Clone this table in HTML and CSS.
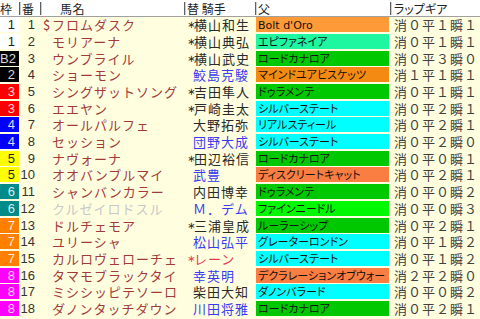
FILE: index.html
```html
<!DOCTYPE html>
<html lang="ja">
<head>
<meta charset="utf-8">
<title>出馬表</title>
<link rel="stylesheet" href="styles.css">
</head>
<body>
<div class="table">
  <div class="head">
    <div class="h h-waku">枠</div>
    <div class="h h-num">番</div>
    <div class="h h-name">馬名</div>
    <div class="h h-jockey">替 騎手</div>
    <div class="h h-sire">父</div>
    <div class="h h-lap">ラップギア</div>
  </div>
  <div class="rows">
    <div class="row"><div class="waku w1">1</div><div class="num">1</div><div class="name"><span class="mark">$</span>フロムダスク</div><div class="jockey"><span class="star">∗</span>横山和生</div><div class="sire s-orange"><span class="latin">Bolt d'Oro</span></div><div class="lap">消０平１瞬１</div></div>
    <div class="row"><div class="waku w1">1</div><div class="num">2</div><div class="name">モリアーナ</div><div class="jockey"><span class="star">∗</span>横山典弘</div><div class="sire s-mint">エピファネイア</div><div class="lap">消０平１瞬１</div></div>
    <div class="row"><div class="waku w2">B2</div><div class="num">3</div><div class="name">ウンブライル</div><div class="jockey"><span class="star">∗</span>横山武史</div><div class="sire s-green">ロードカナロア</div><div class="lap">消０平３瞬０</div></div>
    <div class="row"><div class="waku w2">2</div><div class="num">4</div><div class="name">ショーモン</div><div class="jockey plain j-blue">鮫島克駿</div><div class="sire s-dorange">マインドユアビスケッツ</div><div class="lap">消１平１瞬１</div></div>
    <div class="row"><div class="waku w3">3</div><div class="num">5</div><div class="name">シングザットソング</div><div class="jockey"><span class="star">∗</span>吉田隼人</div><div class="sire s-green">ドゥラメンテ</div><div class="lap">消０平１瞬１</div></div>
    <div class="row"><div class="waku w3">3</div><div class="num">6</div><div class="name">エエヤン</div><div class="jockey"><span class="star">∗</span>戸崎圭太</div><div class="sire s-cyan">シルバーステート</div><div class="lap">消０平２瞬１</div></div>
    <div class="row"><div class="waku w4">4</div><div class="num">7</div><div class="name">オールパルフェ</div><div class="jockey plain">大野拓弥</div><div class="sire s-cyan">リアルスティール</div><div class="lap">消０平２瞬１</div></div>
    <div class="row"><div class="waku w4">4</div><div class="num">8</div><div class="name">セッション</div><div class="jockey plain j-blue">団野大成</div><div class="sire s-cyan">シルバーステート</div><div class="lap">消０平２瞬０</div></div>
    <div class="row"><div class="waku w5">5</div><div class="num">9</div><div class="name">ナヴォーナ</div><div class="jockey"><span class="star">∗</span>田辺裕信</div><div class="sire s-green">ロードカナロア</div><div class="lap">消０平０瞬１</div></div>
    <div class="row"><div class="waku w5">5</div><div class="num">10</div><div class="name">オオバンブルマイ</div><div class="jockey plain j-blue">武豊</div><div class="sire s-coral">ディスクリートキャット</div><div class="lap">消０平２瞬１</div></div>
    <div class="row"><div class="waku w6">6</div><div class="num">11</div><div class="name">シャンバンカラー</div><div class="jockey plain">内田博幸</div><div class="sire s-green">ドゥラメンテ</div><div class="lap">消０平０瞬２</div></div>
    <div class="row"><div class="waku w6">6</div><div class="num">12</div><div class="name scratched">クルゼイロドスル</div><div class="jockey plain j-blue">Ｍ．デム</div><div class="sire s-lime">ファインニードル</div><div class="lap">消０平０瞬３</div></div>
    <div class="row"><div class="waku w7">7</div><div class="num">13</div><div class="name">ドルチェモア</div><div class="jockey"><span class="star">∗</span>三浦皇成</div><div class="sire s-green">ルーラーシップ</div><div class="lap">消０平２瞬１</div></div>
    <div class="row"><div class="waku w7">7</div><div class="num">14</div><div class="name">ユリーシャ</div><div class="jockey plain j-blue">松山弘平</div><div class="sire s-cyan">グレーターロンドン</div><div class="lap">消０平１瞬２</div></div>
    <div class="row"><div class="waku w7">7</div><div class="num">15</div><div class="name">カルロヴェローチェ</div><div class="jockey j-red"><span class="star">∗</span>レーン</div><div class="sire s-cyan">シルバーステート</div><div class="lap">消０平１瞬２</div></div>
    <div class="row"><div class="waku w8">8</div><div class="num">16</div><div class="name">タマモブラックタイ</div><div class="jockey plain j-blue">幸英明</div><div class="sire s-coral">デクラレーションオブウォー</div><div class="lap">消２平２瞬０</div></div>
    <div class="row"><div class="waku w8">8</div><div class="num">17</div><div class="name">ミシシッピテソーロ</div><div class="jockey plain">柴田大知</div><div class="sire s-cyan">ダノンバラード</div><div class="lap">消０平０瞬２</div></div>
    <div class="row"><div class="waku w8">8</div><div class="num">18</div><div class="name">ダノンタッチダウン</div><div class="jockey plain j-blue">川田将雅</div><div class="sire s-green">ロードカナロア</div><div class="lap">消０平２瞬１</div></div>
  </div>
</div>
</body>
</html>
```

FILE: styles.css
```css
* { box-sizing: border-box; }
html, body { margin: 0; padding: 0; }
body {
  width: 480px;
  height: 319px;
  overflow: hidden;
  background: #ffffe0;
  font-family: "Noto Sans CJK JP", sans-serif;
  color: #333;
}

/* header */
.head {
  display: flex;
  height: 17px;
  padding-top: 2px;
  background: #ffffff;
  border-bottom: 1px solid #a0a0a0;
}
.h {
  height: 13px;
  border-right: 1px solid #606060;
  box-shadow: 1px 0 0 #d0d0d0;
  font-size: 12px;
  line-height: 13px;
  white-space: nowrap;
  color: #222;
}
.h-waku { width: 20px; }
.h-num { width: 20px; margin-left: 1px; padding-left: 1px; }
.h-name { width: 143px; margin-left: 1px; padding-left: 18px; letter-spacing: 0.5px; }
.h-jockey { width: 70px; margin-left: 1px; padding-left: 1px; }
.h-sire { width: 134px; margin-left: 1px; padding-left: 1px; }
.h-lap { flex: 1; margin-left: 1px; padding-left: 2px; border-right: none; box-shadow: none; font-feature-settings: "palt"; }

/* rows */
.row {
  display: grid;
  grid-template-columns: 19px 17px 148px 72px 133px 1fr;
  height: 16.7px;
  padding: 0.3px 0 1.4px;
}
.row > div {
  height: 15px;
  line-height: 15px;
  white-space: nowrap;
}

.waku {
  text-align: right;
  padding-right: 4px;
  font-family: "Liberation Sans Narrow", "Liberation Sans", sans-serif;
  font-size: 13px;
  color: rgba(255, 255, 255, 0.85);
}
.w1 { background: #ffffff; color: #222; }
.w2 { background: #000000; }
.w3 { background: #ff0000; }
.w4 { background: #0000ff; }
.w5 { background: #ffff00; color: #222; }
.w6 { background: #008a8a; }
.w7 { background: #ff8000; }
.w8 { background: #ff00ff; }

.num {
  text-align: right;
  padding-right: 1px;
  font-family: "Liberation Sans Narrow", "Liberation Sans", sans-serif;
  font-size: 13px;
  color: #333;
}

.name {
  padding-left: 16px;
  font-size: 13px;
  letter-spacing: 1px;
  color: #a33a3a;
  overflow: hidden;
}
.name.scratched { color: #c8c8c8; }
.mark {
  display: inline-block;
  width: 9px;
  margin-left: -9px;
  letter-spacing: 0;
}

.jockey {
  padding-left: 3px;
  font-size: 13px;
  letter-spacing: 1px;
  color: #2a2a2a;
}
.jockey.plain { padding-left: 9px; }
.j-blue { color: #3a3af0; }
.j-red { color: #e8384f; }
.star {
  display: inline-block;
  width: 7px;
  font-size: 10px;
  letter-spacing: 0;
  font-family: "DejaVu Sans", sans-serif;
  vertical-align: top;
}

.sire {
  padding-left: 2px;
  font-size: 11px;
  font-feature-settings: "palt";
  color: #111;
  overflow: hidden;
}
.latin { font-family: "DejaVu Sans", sans-serif; font-size: 11px; }
.s-orange { background: #ff9a38; }
.s-mint { background: #1ef7a0; }
.s-green { background: #00c800; }
.s-dorange { background: #f58a12; }
.s-cyan { background: #00ffff; }
.s-coral { background: #fa7d42; }
.s-lime { background: #00f800; }

.lap {
  padding-left: 5px;
  font-size: 13px;
  letter-spacing: 1px;
  color: #404040;
}
```
